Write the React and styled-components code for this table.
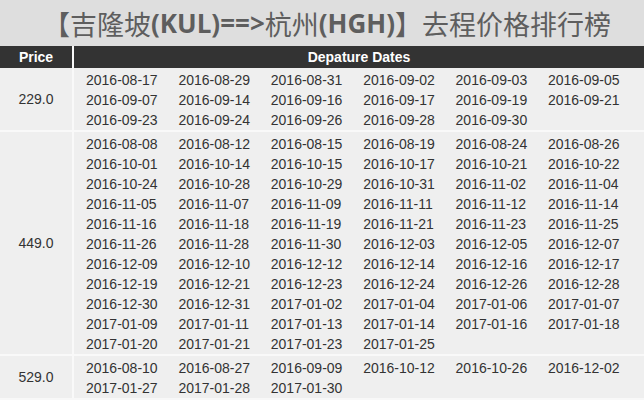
import React from 'react';
import styled, {createGlobalStyle} from 'styled-components';

const GlobalStyle = createGlobalStyle`
  body {
    margin: 0;
    background: #ffffff;
    font-family: "Liberation Sans", Arial, sans-serif;
  }
`;

const rows = [
  {
    price: '229.0',
    dates: [
      '2016-08-17', '2016-08-29', '2016-08-31', '2016-09-02', '2016-09-03', '2016-09-05',
      '2016-09-07', '2016-09-14', '2016-09-16', '2016-09-17', '2016-09-19', '2016-09-21',
      '2016-09-23', '2016-09-24', '2016-09-26', '2016-09-28', '2016-09-30',
    ],
  },
  {
    price: '449.0',
    dates: [
      '2016-08-08', '2016-08-12', '2016-08-15', '2016-08-19', '2016-08-24', '2016-08-26',
      '2016-10-01', '2016-10-14', '2016-10-15', '2016-10-17', '2016-10-21', '2016-10-22',
      '2016-10-24', '2016-10-28', '2016-10-29', '2016-10-31', '2016-11-02', '2016-11-04',
      '2016-11-05', '2016-11-07', '2016-11-09', '2016-11-11', '2016-11-12', '2016-11-14',
      '2016-11-16', '2016-11-18', '2016-11-19', '2016-11-21', '2016-11-23', '2016-11-25',
      '2016-11-26', '2016-11-28', '2016-11-30', '2016-12-03', '2016-12-05', '2016-12-07',
      '2016-12-09', '2016-12-10', '2016-12-12', '2016-12-14', '2016-12-16', '2016-12-17',
      '2016-12-19', '2016-12-21', '2016-12-23', '2016-12-24', '2016-12-26', '2016-12-28',
      '2016-12-30', '2016-12-31', '2017-01-02', '2017-01-04', '2017-01-06', '2017-01-07',
      '2017-01-09', '2017-01-11', '2017-01-13', '2017-01-14', '2017-01-16', '2017-01-18',
      '2017-01-20', '2017-01-21', '2017-01-23', '2017-01-25',
    ],
  },
  {
    price: '529.0',
    dates: [
      '2016-08-10', '2016-08-27', '2016-09-09', '2016-10-12', '2016-10-26', '2016-12-02',
      '2017-01-27', '2017-01-28', '2017-01-30',
    ],
  },
];

const Page = styled.div`
  width: 644px;
  height: 400px;
  overflow: hidden;
  background: #f8f8f8;
`;

const Title = styled.h1`
  margin: 0;
  height: 46px;
  display: flex;
  align-items: center;
  justify-content: center;
  background: #dedede;
  color: #5e5e5e;
  font-family: "Noto Sans CJK SC", sans-serif;
  font-size: 27px;
  font-weight: 400;
  white-space: nowrap;
  padding-left: 10px;
`;

const Latin = styled.span`
  font-family: "Open Sans", "Liberation Sans", sans-serif;
  font-weight: 700;
  font-size: 26px;
`;

const Table = styled.div`
  display: grid;
  grid-template-columns: 72px 1fr;
  column-gap: 2px;
  row-gap: 2px;
  background: #f9f9f9;
`;

const HeadCell = styled.div`
  height: 22px;
  line-height: 22px;
  background: #333333;
  color: #ffffff;
  font-size: 14px;
  font-weight: 700;
  text-align: center;
  margin-bottom: -2px;
`;

const PriceCell = styled.div`
  display: flex;
  align-items: center;
  justify-content: center;
  background: #efefef;
  color: #333333;
  font-size: 14px;
`;

const DatesCell = styled.div`
  display: flex;
  flex-wrap: wrap;
  padding: 2px 0 0 12px;
  background: #efefef;
`;

const DateItem = styled.span`
  width: 92.4px;
  line-height: 20px;
  font-size: 14px;
  color: #333333;
`;

export default function App() {
  return (
    <Page>
      <GlobalStyle />
      <Title>
        【吉隆坡<Latin>(KUL)==&gt;</Latin>杭州<Latin>(HGH)</Latin>】去程价格排行榜
      </Title>
      <Table>
        <HeadCell>Price</HeadCell>
        <HeadCell>Depature Dates</HeadCell>
        {rows.map((row) => (
          <React.Fragment key={row.price}>
            <PriceCell>{row.price}</PriceCell>
            <DatesCell>
              {row.dates.map((d) => (
                <DateItem key={d}>{d}</DateItem>
              ))}
            </DatesCell>
          </React.Fragment>
        ))}
      </Table>
    </Page>
  );
}
